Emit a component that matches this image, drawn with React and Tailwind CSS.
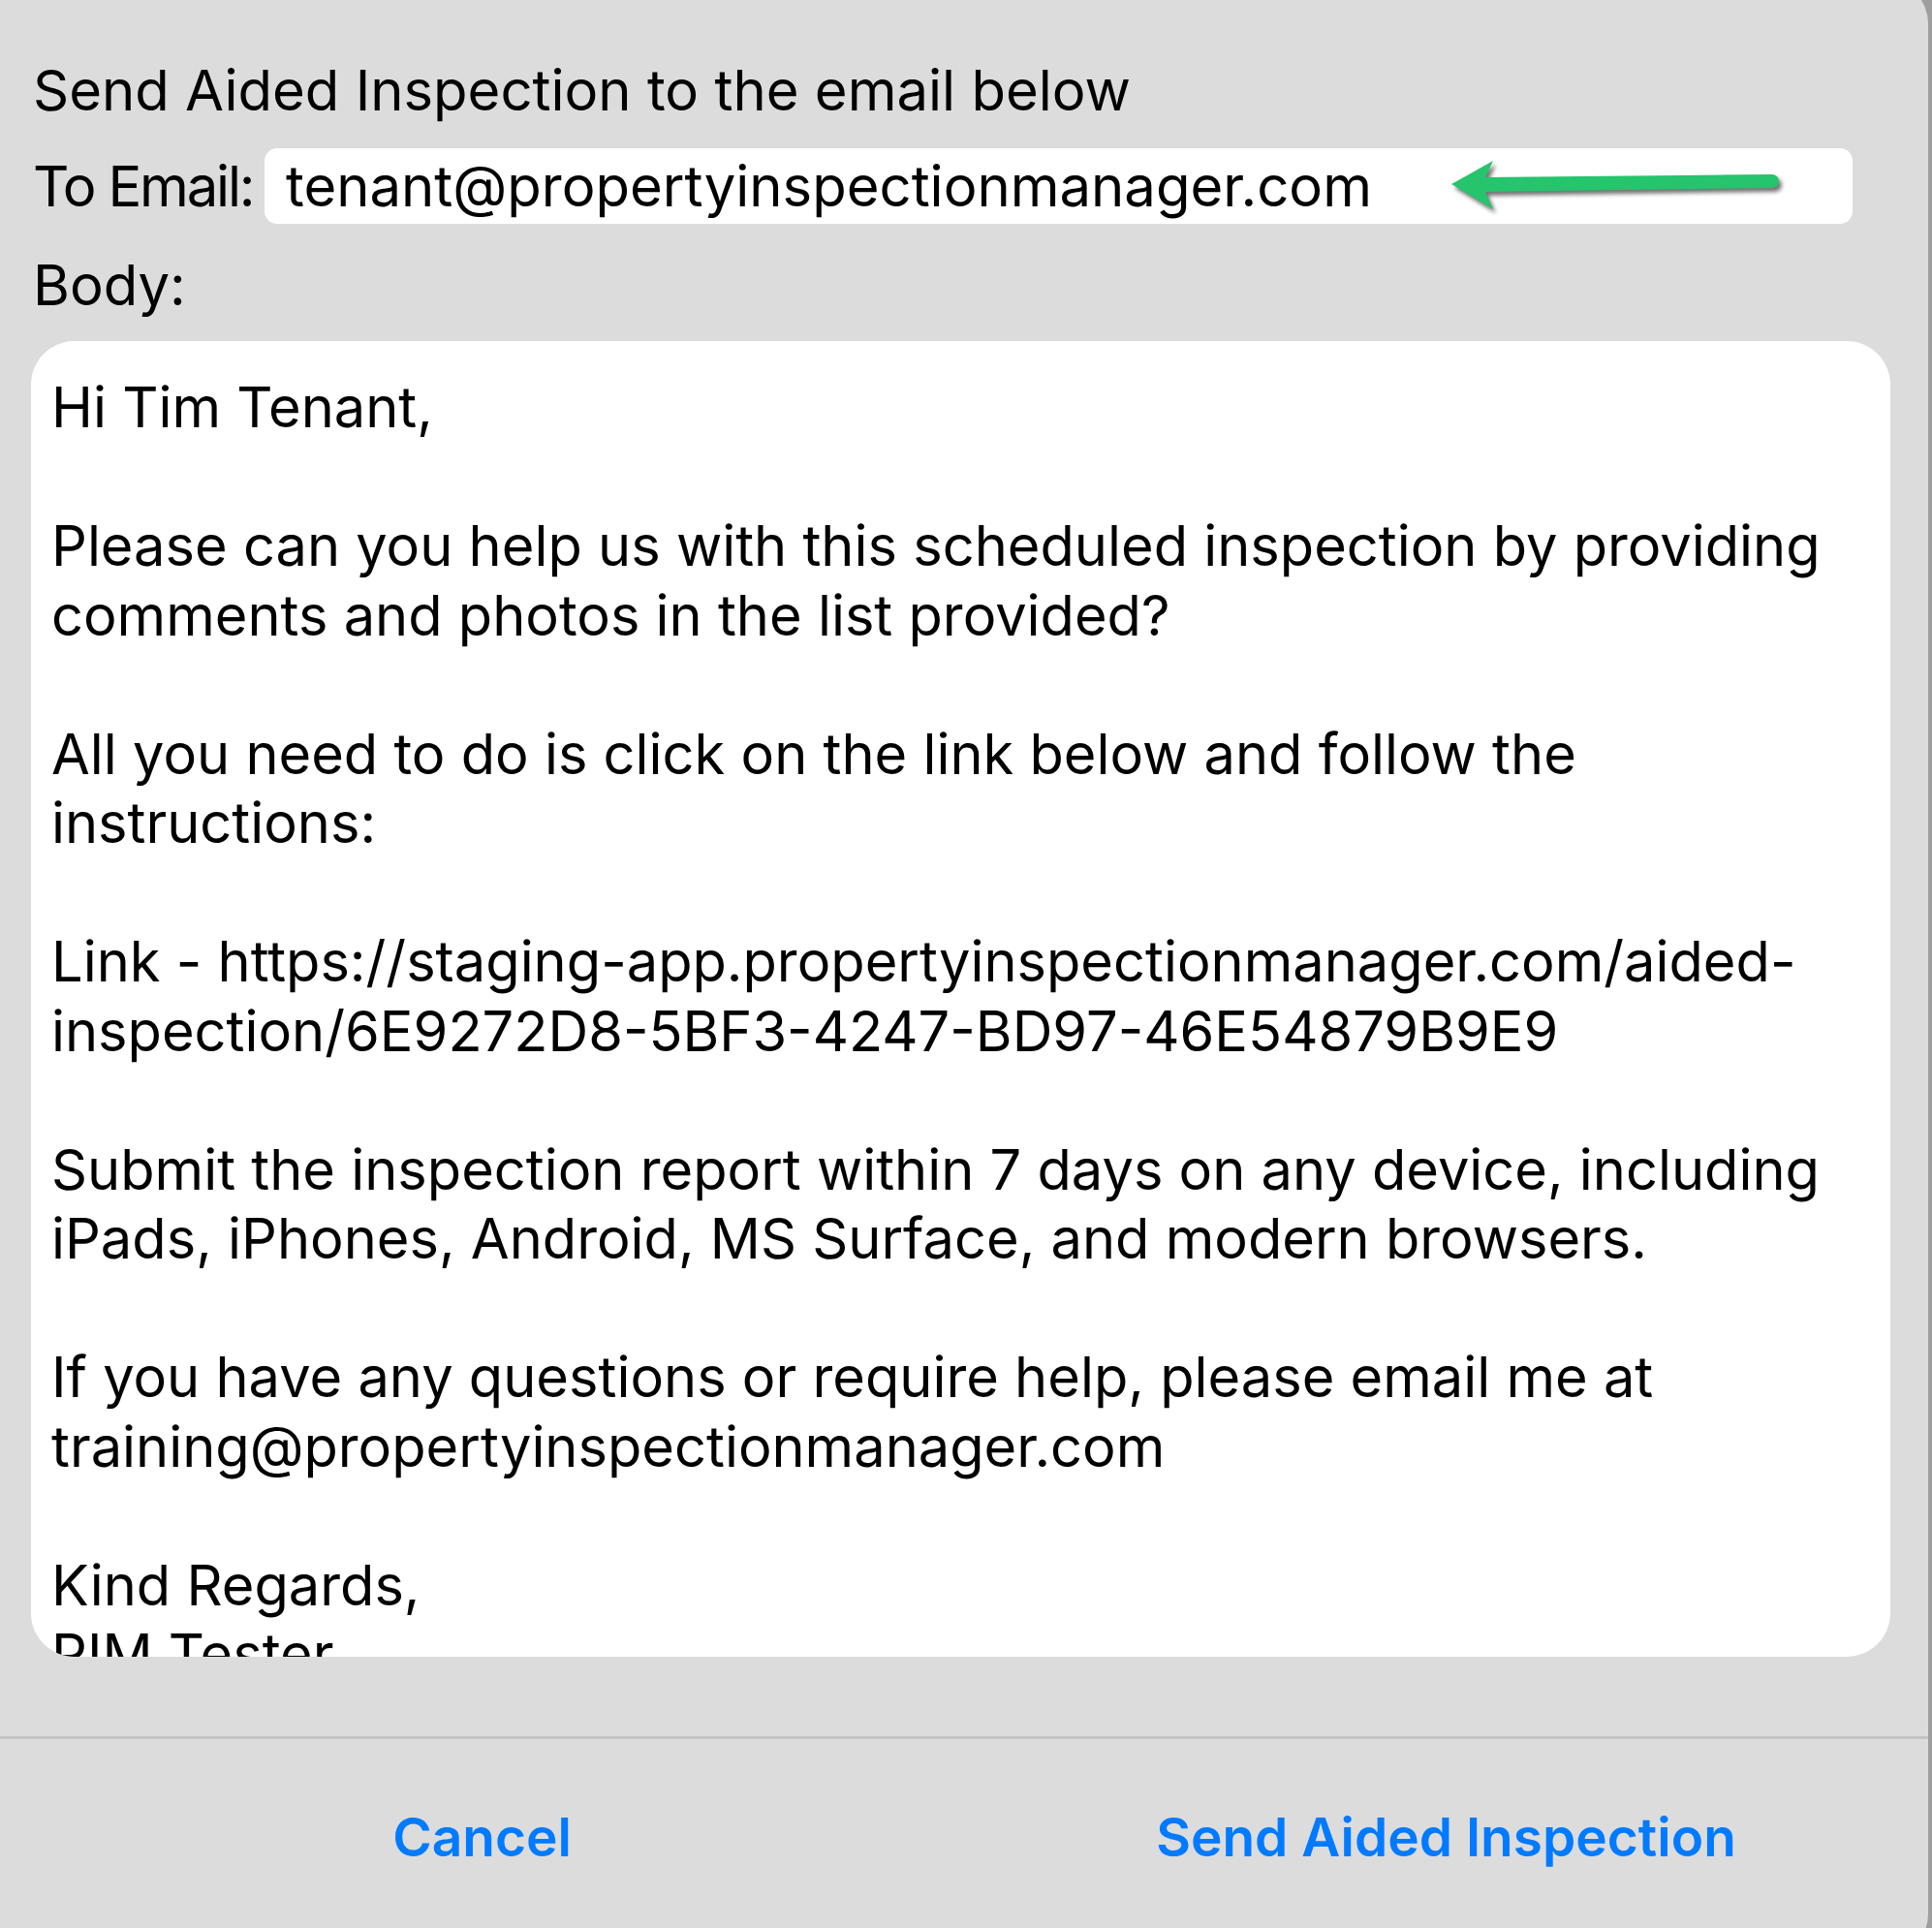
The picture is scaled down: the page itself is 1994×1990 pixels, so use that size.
import React from 'react';

const bodyLines = [
    "Hi Tim Tenant,",
    "",
    "Please can you help us with this scheduled inspection by providing",
    "comments and photos in the list provided?",
    "",
    "All you need to do is click on the link below and follow the",
    "instructions:",
    "",
    "Link - https://staging-app.propertyinspectionmanager.com/aided-",
    "inspection/6E9272D8-5BF3-4247-BD97-46E54879B9E9",
    "",
    "Submit the inspection report within 7 days on any device, including",
    "iPads, iPhones, Android, MS Surface, and modern browsers.",
    "",
    "If you have any questions or require help, please email me at",
    "training@propertyinspectionmanager.com",
    "",
    "Kind Regards,",
    "PIM Tester",
];

const GreenArrow = () => (
    <svg
        width="355"
        height="70"
        viewBox="0 0 355 70"
        className="absolute left-[1215px] top-[2px] drop-shadow-[3px_4px_2px_rgba(0,0,0,0.55)]"
    >
        <path
            d="M10 35 L53 11 L45 28 L341 25 A7 7 0 0 1 341 39 L45 43 L53 61 Z"
            fill="#25c46d"
        />
    </svg>
);

const App = () => {
    return (
        <div className="w-[1994px] h-[1990px] overflow-hidden bg-[#9e9e9e] font-['Inter',sans-serif] text-black">
            <div className="-mt-[20px] -ml-[30px] w-[2020px] h-[2040px] rounded-[44px] bg-[#dcdcdc] flex flex-col">
                <div className="pl-[64px] pt-[77px]">
                    <div className="h-[72px] flex items-center text-[58px] leading-none whitespace-nowrap">
                        Send Aided Inspection to the email below
                    </div>

                    <div className="mt-[24px] flex items-center">
                        <span className="w-[239px] shrink-0 text-[58px] leading-none whitespace-nowrap tracking-[-2.2px]">To Email:</span>
                        <div className="relative w-[1639px] h-[78px] shrink-0 rounded-[13px] bg-white pl-[22px] flex items-center text-[58px] leading-none whitespace-nowrap">
                            tenant@propertyinspectionmanager.com
                            <GreenArrow />
                        </div>
                    </div>

                    <div className="mt-[27px] h-[72px] flex items-center text-[58px] leading-none">Body:</div>

                    <div className="mt-[22px] -ml-[2px] w-[1919px] h-[1358px] rounded-[45px] bg-white overflow-hidden pl-[21px] pt-[33px]">
                        {bodyLines.map((line, i) => (
                            <div key={i} className="h-[71.5px] leading-[71.5px] text-[57.75px] whitespace-nowrap">
                                {line || '\u00a0'}
                            </div>
                        ))}
                    </div>
                </div>

                <div className="mt-[82px] h-[3px] bg-[#c4c4c4]" />

                <div className="pl-[30px] h-[202px] grid grid-cols-2 items-center">
                    <button className="text-center text-[55px] font-semibold text-[#007aff]">Cancel</button>
                    <button className="text-center text-[55px] font-semibold text-[#007aff]">Send Aided Inspection</button>
                </div>
            </div>
        </div>
    );
};

export default App;
